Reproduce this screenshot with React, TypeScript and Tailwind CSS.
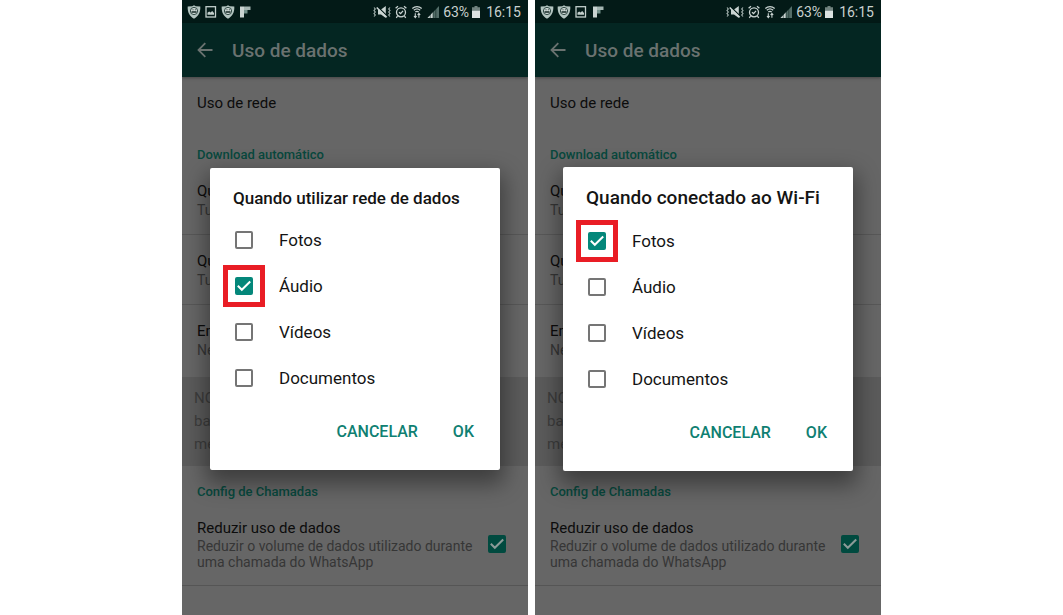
import { useId, useState } from 'react';

type NoticeIcon = 'shield' | 'image' | 'flip';

function Shield() {
  return (
    <svg width="14" height="14" viewBox="0 0 14 14" aria-hidden="true">
      <path d="M7 .3 8.800 1.300 13.300 1.600C13.700 7 11.500 11.500 7 13.800 2.500 11.500.3 7 .7 1.600L5.200 1.300Z" fill="#b3c4c0" />
      <circle cx="7" cy="6" r="3.600" fill="#d5dfdc" stroke="#2c4541" strokeWidth="1" />
      <path d="M4.500 7h5" stroke="#1c302d" strokeWidth="1.600" fill="none" />
      <path d="M5.500 4.800h1M7.800 4.800h1" stroke="#1c302d" strokeWidth="1" fill="none" />
    </svg>
  );
}

function ImageIcon() {
  return (
    <svg width="14" height="14" viewBox="0 0 14 14" aria-hidden="true">
      <rect x="2" y="1.700" width="9.500" height="10.300" fill="none" stroke="#c3cfcc" strokeWidth="1.300" />
      <path d="M3.500 9.700V7.800L5.200 6.500 6.500 7.600 8.200 6 10 8v1.700Z" fill="#c3cfcc" />
    </svg>
  );
}

function Flip() {
  return (
    <svg width="14" height="14" viewBox="0 0 14 14" aria-hidden="true">
      <path d="M2 1.500H6V12.500H2Z" fill="#c9d3d1" />
      <path d="M6 1.500H12.500V5H6Z" fill="#a4b5b2" />
      <path d="M6 5H9.500V8.500H6Z" fill="#72908a" />
    </svg>
  );
}

function Notice({ kind }: { kind: NoticeIcon }) {
  if (kind === 'shield') return <Shield />;
  if (kind === 'image') return <ImageIcon />;
  return <Flip />;
}

function MuteVibrate() {
  return (
    <svg width="18" height="14" viewBox="0 0 18 14" fill="none" aria-hidden="true">
      <path d="M1 2.500 2.300 4 1 5.500 2.300 7 1 8.500 2.300 10 1 11.500M17 2.500 15.700 4 17 5.500 15.700 7 17 8.500 15.700 10 17 11.500" stroke="#aebcb9" strokeWidth="1.100" />
      <path d="M5 4.500H8L12.800 1V13L8 9.500H5Z" fill="#c9d3d1" />
      <path d="M4 1.300 14 11" stroke="#031a17" strokeWidth="1.500" />
      <path d="M3.700 2.500 13.700 12.200" stroke="#d0d9d7" strokeWidth="1.500" />
    </svg>
  );
}

function Alarm() {
  return (
    <svg width="12" height="14" viewBox="0 0 12 14" fill="none" stroke="#c9d3d1" aria-hidden="true">
      <circle cx="6" cy="7.300" r="4.500" strokeWidth="1.300" />
      <path d="M.6 3.300 3 1.300M11.400 3.300 9 1.300M2.500 11 1.300 12.800M9.500 11l1.200 1.800M4 7.200 5.600 8.600 8 5.800" strokeWidth="1.300" />
    </svg>
  );
}

function Wifi() {
  return (
    <svg width="12" height="14" viewBox="0 0 12 14" fill="none" stroke="#c9d3d1" aria-hidden="true">
      <path d="M1.300 3.500C4 1 8 1 10.700 3.500M2.800 5.300C4.700 3.600 7.300 3.600 9.200 5.300M4.300 7C5.300 6.200 6.700 6.200 7.700 7" strokeWidth="1.200" />
      <path d="M4.300 8.300V12.500M3 11l1.300 1.700L5.600 11M7.900 12.800V8.800M6.600 10 7.900 8.300 9.200 10" strokeWidth="1.100" />
    </svg>
  );
}

function Signal() {
  return (
    <svg width="12" height="14" viewBox="0 0 12 14" aria-hidden="true">
      <path d="M.5 13 12 1V13Z" fill="#536d68" />
      <path d="M.5 13 6 7.300V13Z" fill="#c9d3d1" />
      <path d="M3.300 9v4M6 6v7M8.800 3v10" stroke="#031a17" strokeWidth=".5" />
    </svg>
  );
}

function Battery() {
  return (
    <svg width="8" height="14" viewBox="0 0 8 14" aria-hidden="true">
      <path d="M2.500 1H5.500V2.300H8V5.500H0V2.300H2.500Z" fill="#71827f" />
      <path d="M0 5.500H8V13H0Z" fill="#dde3e2" />
    </svg>
  );
}

function StatusBar({ notices }: { notices: NoticeIcon[] }) {
  return (
    <div className="flex h-[23px] items-center justify-between bg-[#031a17] pl-[5px] pr-[7px] text-sm leading-5 text-[#c9d1cf]">
      <div className="flex items-center gap-[3px]">
        {notices.map((kind, i) => (
          <Notice key={i} kind={kind} />
        ))}
      </div>
      <div className="flex items-center">
        <div className="flex items-center gap-1">
          <MuteVibrate />
          <Alarm />
          <Wifi />
          <Signal />
        </div>
        <span className="ml-1">63%</span>
        <span className="ml-[3px] mr-[6px] flex">
          <Battery />
        </span>
        <span>16:15</span>
      </div>
    </div>
  );
}

function Check({ dim = false, checked, onChange, id }: { dim?: boolean; checked: boolean; onChange: () => void; id: string }) {
  return (
    <span className="relative flex h-[18px] w-[18px] shrink-0">
      <input
        id={id}
        type="checkbox"
        checked={checked}
        onChange={onChange}
        className={
          dim
            ? 'h-full w-full appearance-none rounded-xs border-2 border-[#303030] checked:border-[#004a3f] checked:bg-[#004a3f]'
            : 'h-full w-full appearance-none rounded-xs border-2 border-[#757575] checked:border-[#04877a] checked:bg-[#04877a]'
        }
      />
      {checked && (
        <svg className="pointer-events-none absolute inset-0" width="18" height="18" viewBox="0 0 18 18" fill="none" aria-hidden="true">
          <path d="M2.800 8.800 6.800 12.800 15.200 4.500" stroke={dim ? '#8b9b98' : '#ffffff'} strokeWidth="2" />
        </svg>
      )}
    </span>
  );
}

const options = ['Fotos', 'Áudio', 'Vídeos', 'Documentos'];

function Dialog({ title, large, marked }: { title: string; large: boolean; marked: string }) {
  const id = useId();
  const [selected, setSelected] = useState<string[]>([marked]);
  const toggle = (name: string) =>
    setSelected((old) => (old.includes(name) ? old.filter((n) => n !== name) : [...old, name]));

  return (
    <div role="dialog" aria-labelledby={id} className="w-full rounded-xs bg-white shadow-[0_10px_22px_4px_rgba(0,0,0,0.4)]">
      <h2
        id={id}
        className={
          large
            ? 'px-[23px] pt-[18px] pb-[7px] text-[19px] leading-[26px] font-medium text-[#141414]'
            : 'px-[23px] pt-[18px] pb-[7px] text-[17px] leading-6 font-medium text-[#141414]'
        }
      >
        {title}
      </h2>
      <ul>
        {options.map((name) => (
          <li key={name} className="flex h-[46px] items-center gap-[26px] pl-[25px]">
            <span className="relative flex">
              <Check id={id + name} checked={selected.includes(name)} onChange={() => toggle(name)} />
              {name === marked && (
                <span className="pointer-events-none absolute -inset-3 border-5 border-[#e91d25]" />
              )}
            </span>
            <label htmlFor={id + name} className="text-[17px] leading-6 text-[#141414]">
              {name}
            </label>
          </li>
        ))}
      </ul>
      <div className="flex justify-end gap-[35px] pt-[19px] pr-[26px] pb-[26px] text-base leading-6 font-medium text-[#0f8072]">
        <button type="button">CANCELAR</button>
        <button type="button">OK</button>
      </div>
    </div>
  );
}

function Row({ title, detail, last = false }: { title: string; detail: string; last?: boolean }) {
  return (
    <div className={last ? 'px-[15px] pt-4 pb-[18px]' : 'border-b border-[#585858] px-[15px] pt-4 pb-[15px]'}>
      <p className="text-[15px] leading-5 text-[#0c0c0c]">{title}</p>
      <p className="text-sm leading-[18px] text-[#363636]">{detail}</p>
    </div>
  );
}

function Phone({ notices, title, large, marked }: { notices: NoticeIcon[]; title: string; large: boolean; marked: string }) {
  const id = useId();
  const [reduce, setReduce] = useState(true);

  return (
    <section className="relative min-h-screen w-full max-w-[346px] overflow-hidden bg-[#666666]">
      <StatusBar notices={notices} />
      <header className="flex h-[54px] items-center gap-[19px] bg-[#042622] pl-[15px] text-[#6a7270] shadow-[0_1px_3px_rgba(0,0,0,0.35)]">
        <button type="button" aria-label="Voltar">
          <svg width="16" height="16" viewBox="0 0 16 16" fill="none" stroke="currentColor" strokeWidth="1.800" aria-hidden="true">
            <path d="M15.500 8H1.500M8.300 1.200 1.500 8l6.800 6.800" />
          </svg>
        </button>
        <h1 className="pt-px text-[19px] leading-6 font-medium">Uso de dados</h1>
      </header>
      <main>
        <p className="px-[15px] pt-4 pb-[18px] text-[15px] leading-5 text-[#0c0c0c]">Uso de rede</p>
        <h2 className="px-[15px] pt-[14px] text-[13px] leading-5 font-medium text-[#08483d]">Download automático</h2>
        <Row title="Qu" detail="Tu" />
        <Row title="Qu" detail="Tu" />
        <Row title="Em" detail="Ne" last />
        <p className="bg-[#5b5b5b] px-3 py-[10px] text-[15px] leading-[23px] text-[#3d3d3d]">
          NO
          <br />
          ba
          <br />
          me
        </p>
        <h2 className="px-[15px] pt-4 text-[13px] leading-5 font-medium text-[#08483d]">Config de Chamadas</h2>
        <div className="flex items-center justify-between border-b border-[#555555] pt-4 pr-[22px] pb-[15px] pl-[15px]">
          <label htmlFor={id}>
            <span className="block text-[15px] leading-5 text-[#0c0c0c]">Reduzir uso de dados</span>
            <span className="block max-w-[280px] text-sm leading-4 text-[#363636]">
              Reduzir o volume de dados utilizado durante uma chamada do WhatsApp
            </span>
          </label>
          <Check dim id={id} checked={reduce} onChange={() => setReduce(!reduce)} />
        </div>
      </main>
      <div className="absolute inset-x-0 top-[23px] bottom-0 flex items-center px-7">
        <Dialog title={title} large={large} marked={marked} />
      </div>
    </section>
  );
}

export default function App() {
  return (
    <div className="flex min-h-screen justify-center gap-[7px] bg-white font-[Roboto,sans-serif]">
      <Phone notices={['shield', 'image', 'shield', 'flip']} title="Quando utilizar rede de dados" large={false} marked="Áudio" />
      <Phone notices={['shield', 'shield', 'image', 'flip']} title="Quando conectado ao Wi-Fi" large marked="Fotos" />
    </div>
  );
}
